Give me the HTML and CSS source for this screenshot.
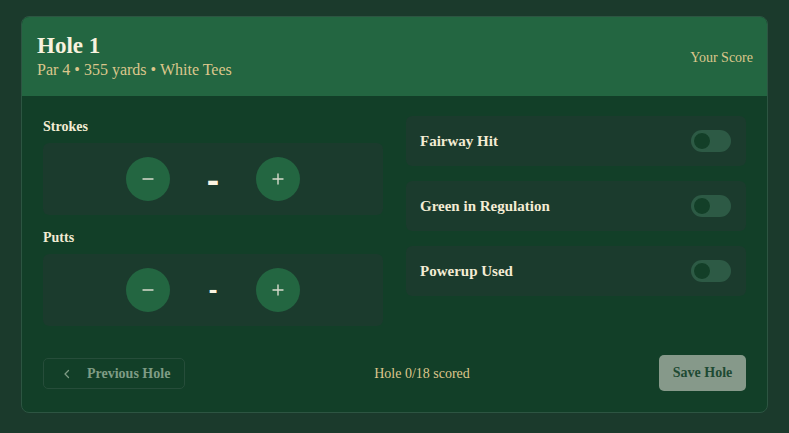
FILE: index.html
```html
<!DOCTYPE html>
<html lang="en">
<head>
<meta charset="utf-8">
<title>Hole 1</title>
<link rel="stylesheet" href="styles.css">
</head>
<body>
<div class="card">
  <header class="card-head">
    <div class="head-info">
      <h1 class="hole-title">Hole 1</h1>
      <div class="hole-sub">Par 4 • 355 yards • White Tees</div>
    </div>
    <div class="your-score">Your Score</div>
  </header>
  <section class="card-body">
    <div class="grid">
      <div class="col-left">
        <div class="field">
          <div class="field-label">Strokes</div>
          <div class="counter">
            <button class="circle-btn" aria-label="decrease">
              <svg width="14" height="14" viewBox="0 0 14 14"><path d="M2 7h10" stroke="currentColor" stroke-width="1.4" stroke-linecap="round"/></svg>
            </button>
            <span class="count-value big">-</span>
            <button class="circle-btn" aria-label="increase">
              <svg width="14" height="14" viewBox="0 0 14 14"><path d="M2 7h10M7 2v10" stroke="currentColor" stroke-width="1.4" stroke-linecap="round"/></svg>
            </button>
          </div>
        </div>
        <div class="field">
          <div class="field-label">Putts</div>
          <div class="counter">
            <button class="circle-btn" aria-label="decrease">
              <svg width="14" height="14" viewBox="0 0 14 14"><path d="M2 7h10" stroke="currentColor" stroke-width="1.4" stroke-linecap="round"/></svg>
            </button>
            <span class="count-value small">-</span>
            <button class="circle-btn" aria-label="increase">
              <svg width="14" height="14" viewBox="0 0 14 14"><path d="M2 7h10M7 2v10" stroke="currentColor" stroke-width="1.4" stroke-linecap="round"/></svg>
            </button>
          </div>
        </div>
      </div>
      <div class="col-right">
        <div class="toggle-row"><span class="toggle-label">Fairway Hit</span><span class="toggle"><span class="knob"></span></span></div>
        <div class="toggle-row"><span class="toggle-label">Green in Regulation</span><span class="toggle"><span class="knob"></span></span></div>
        <div class="toggle-row"><span class="toggle-label">Powerup Used</span><span class="toggle"><span class="knob"></span></span></div>
      </div>
    </div>
    <footer class="card-foot">
      <button class="prev-btn">
        <svg width="12" height="12" viewBox="0 0 12 12"><path d="M7.5 2.5L4 6l3.5 3.5" fill="none" stroke="currentColor" stroke-width="1.3" stroke-linecap="round" stroke-linejoin="round"/></svg>
        <span>Previous Hole</span>
      </button>
      <div class="progress">Hole 0/18 scored</div>
      <button class="save-btn">Save Hole</button>
    </footer>
  </section>
</div>
</body>
</html>
```
FILE: styles.css
```css
* { box-sizing: border-box; }
html, body { margin: 0; padding: 0; }
body {
  background: #1b3a2c;
  font-family: "Liberation Serif", "DejaVu Serif", serif;
  color: #f6efd8;
  padding: 16px 21px;
  width: 789px;
  height: 433px;
  overflow: hidden;
}
.card {
  border: 1px solid #2d5542;
  border-radius: 8px;
  background: #123f28;
  overflow: hidden;
  height: 397px;
  display: flex;
  flex-direction: column;
}
.card-head {
  background: #236641;
  height: 79px;
  padding: 0 14px 0 15px;
  display: flex;
  align-items: center;
  justify-content: space-between;
}
.hole-title {
  margin: 0;
  font-size: 23px;
  font-weight: 700;
  line-height: 26px;
  color: #f8f2de;
}
.hole-sub {
  font-size: 16px;
  line-height: 20px;
  color: #dcc68c;
  margin-top: 1px;
}
.your-score {
  font-size: 14px;
  color: #dcc68c;
  margin-top: 2px;
}
.card-body {
  flex: 1;
  padding: 21px 21px 20px 21px;
  display: flex;
  flex-direction: column;
}
.grid {
  display: grid;
  grid-template-columns: 1fr 1fr;
  column-gap: 23px;
  align-items: start;
}
.col-left { display: flex; flex-direction: column; gap: 13px; }
.field-label {
  font-size: 14px;
  font-weight: 700;
  line-height: 20px;
  margin-bottom: 6px;
  color: #f3ecd4;
}
.counter {
  background: #1b3b2d;
  border-radius: 6px;
  height: 72px;
  display: flex;
  align-items: center;
  justify-content: center;
}
.circle-btn {
  width: 44px;
  height: 44px;
  border-radius: 50%;
  border: none;
  background: #236641;
  color: #d9dccd;
  display: flex;
  align-items: center;
  justify-content: center;
  padding: 0;
}
.count-value {
  width: 86px;
  text-align: center;
  font-weight: 700;
  color: #fbf5e2;
  font-family: "DejaVu Sans", sans-serif;
  line-height: 1;
}
.count-value.big { font-size: 31px; padding-top: 4px; }
.count-value.small { font-size: 22px; padding-top: 2px; }
.col-right { display: flex; flex-direction: column; gap: 15px; margin-top: -1px; }
.toggle-row {
  background: #1b3b2d;
  border-radius: 6px;
  height: 50px;
  display: flex;
  align-items: center;
  justify-content: space-between;
  padding: 0 15px 0 14px;
}
.toggle-label {
  font-size: 15px;
  font-weight: 700;
  color: #f3ecd4;
}
.toggle {
  width: 40px;
  height: 22px;
  border-radius: 11px;
  background: #2d5a45;
  display: flex;
  align-items: center;
  padding: 0 2px;
}
.knob {
  width: 18px;
  height: 18px;
  border-radius: 50%;
  background: #133f28;
  border: 1px solid #2f5e47;
}
.card-foot {
  margin-top: auto;
  display: flex;
  align-items: center;
  justify-content: space-between;
}
.prev-btn {
  width: 142px;
  height: 31px;
  border: 1px solid #264d3a;
  border-radius: 5px;
  background: transparent;
  color: #7f9c85;
  font-family: inherit;
  font-size: 14px;
  font-weight: 700;
  display: flex;
  align-items: center;
  gap: 14px;
  padding: 0 0 0 17px;
}
.progress {
  font-size: 14px;
  color: #dcc68c;
}
.save-btn {
  width: 87px;
  height: 36px;
  border: none;
  border-radius: 5px;
  background: #86998a;
  color: #1e4a33;
  font-family: inherit;
  font-size: 14px;
  font-weight: 700;
  padding: 0;
  margin-bottom: 1px;
}
```
